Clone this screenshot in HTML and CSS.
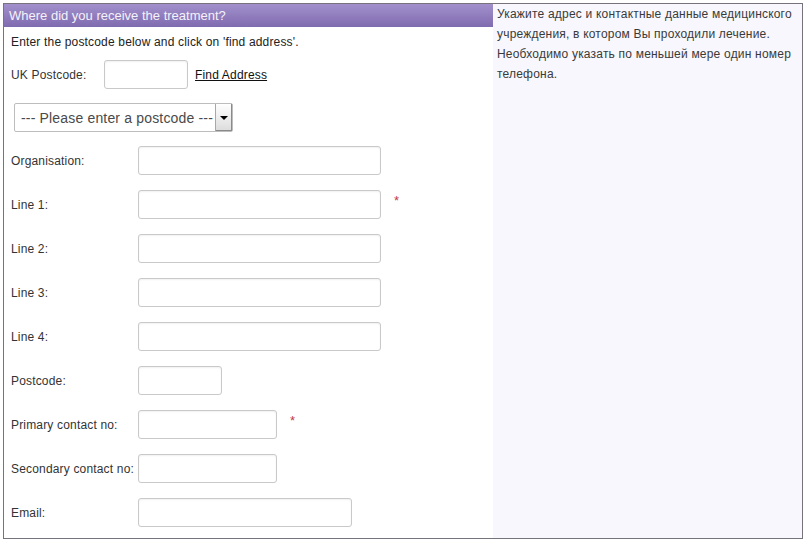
FILE: index.html
```html
<!DOCTYPE html>
<html>
<head>
<meta charset="utf-8">
<link rel="stylesheet" href="styles.css">
</head>
<body>
<div class="frame">
  <div class="main">
    <div class="header">Where did you receive the treatment?</div>
    <div class="content">
      <p class="intro">Enter the postcode below and click on 'find address'.</p>
      <div class="postcode-row">
        <span class="pc-label">UK Postcode:</span>
        <input class="field w-pc" type="text">
        <a class="find" href="#">Find Address</a>
      </div>
      <div class="select-row">
        <div class="fake-select">
          <span class="sel-text">--- Please enter a postcode ---</span>
          <span class="sel-btn"><span class="tri"></span></span>
        </div>
      </div>
      <div class="rows">
        <div class="row"><span class="label">Organisation:</span><input class="field w-long" type="text"></div>
        <div class="row"><span class="label">Line 1:</span><input class="field w-long" type="text"><span class="req">*</span></div>
        <div class="row"><span class="label">Line 2:</span><input class="field w-long" type="text"></div>
        <div class="row"><span class="label">Line 3:</span><input class="field w-long" type="text"></div>
        <div class="row"><span class="label">Line 4:</span><input class="field w-long" type="text"></div>
        <div class="row"><span class="label">Postcode:</span><input class="field w-short" type="text"></div>
        <div class="row"><span class="label">Primary contact no:</span><input class="field w-mid" type="text"><span class="req">*</span></div>
        <div class="row"><span class="label">Secondary contact no:</span><input class="field w-mid" type="text"></div>
        <div class="row"><span class="label">Email:</span><input class="field w-email" type="text"></div>
      </div>
    </div>
  </div>
  <div class="aside">
    <p>Укажите адрес и контактные данные медицинского учреждения, в котором Вы проходили лечение. Необходимо указать по меньшей мере один номер телефона.</p>
  </div>
</div>
</body>
</html>
```
FILE: styles.css
```css
* { box-sizing: border-box; }
html, body { margin: 0; padding: 0; background: #fff; }
body { font-family: "Liberation Sans", Arial, sans-serif; font-size: 12px; color: #333; letter-spacing: 0.17px; }

.frame {
  margin: 3px 0 0 3px;
  width: 800px;
  height: 536px;
  border: 1px solid #76737c;
  display: flex;
}
.main { width: 489px; background: #fff; display: flex; flex-direction: column; }
.aside { flex: 1; background: #f7f7fd; padding: 0 4px 0 4px; }
.aside p { margin: 0; line-height: 20px; font-size: 12px; color: #3a3a3a; letter-spacing: 0.2px; }

.header {
  height: 23px;
  background: linear-gradient(#a290cc, #7f6baf);
  color: #f4f2fa;
  font-size: 13px;
  line-height: 23px;
  padding-left: 5px;
  letter-spacing: 0;
}
.content { padding: 0 0 0 7px; }
.intro { margin: 7px 0 0 0; line-height: 16px; color: #222; }

.postcode-row { display: flex; align-items: center; height: 29px; margin-top: 10px; }
.pc-label { width: 93px; color: #333; }
.find { margin-left: 7px; color: #111; text-decoration: underline; }

.field {
  height: 29px;
  border: 1px solid #c9c9c9;
  border-radius: 3px;
  background: #fff;
  box-shadow: inset 0 1px 2px rgba(0,0,0,0.06);
  font: inherit;
  padding: 0 4px;
}
.w-pc { width: 84px; }
.w-long { width: 243px; }
.w-short { width: 84px; }
.w-mid { width: 139px; }
.w-email { width: 214px; }

.select-row { margin: 14px 0 0 3px; }
.fake-select {
  width: 219px;
  height: 29px;
  border: 1px solid #bdbdbd;
  border-radius: 2px;
  display: flex;
  align-items: center;
  justify-content: space-between;
  background: #fff;
}
.sel-text { font-size: 14px; color: #4a4a4a; padding-left: 6px; }
.sel-btn {
  width: 17px;
  height: 27px;
  border-left: 1px solid #a8a8a8;
  background: linear-gradient(#ffffff, #dcdcdc);
  display: flex;
  align-items: center;
  justify-content: center;
  box-shadow: inset -1px -1px 0 #8a8a8a;
}
.tri {
  width: 0; height: 0;
  border-left: 4px solid transparent;
  border-right: 4px solid transparent;
  border-top: 4px solid #000;
}

.rows { margin-top: 14px; display: flex; flex-direction: column; gap: 15px; }
.row { display: flex; align-items: center; height: 29px; }
.label { width: 127px; color: #333; }
.req { color: #c0394b; margin-left: 13px; font-size: 13px; position: relative; top: -4px; }
```
